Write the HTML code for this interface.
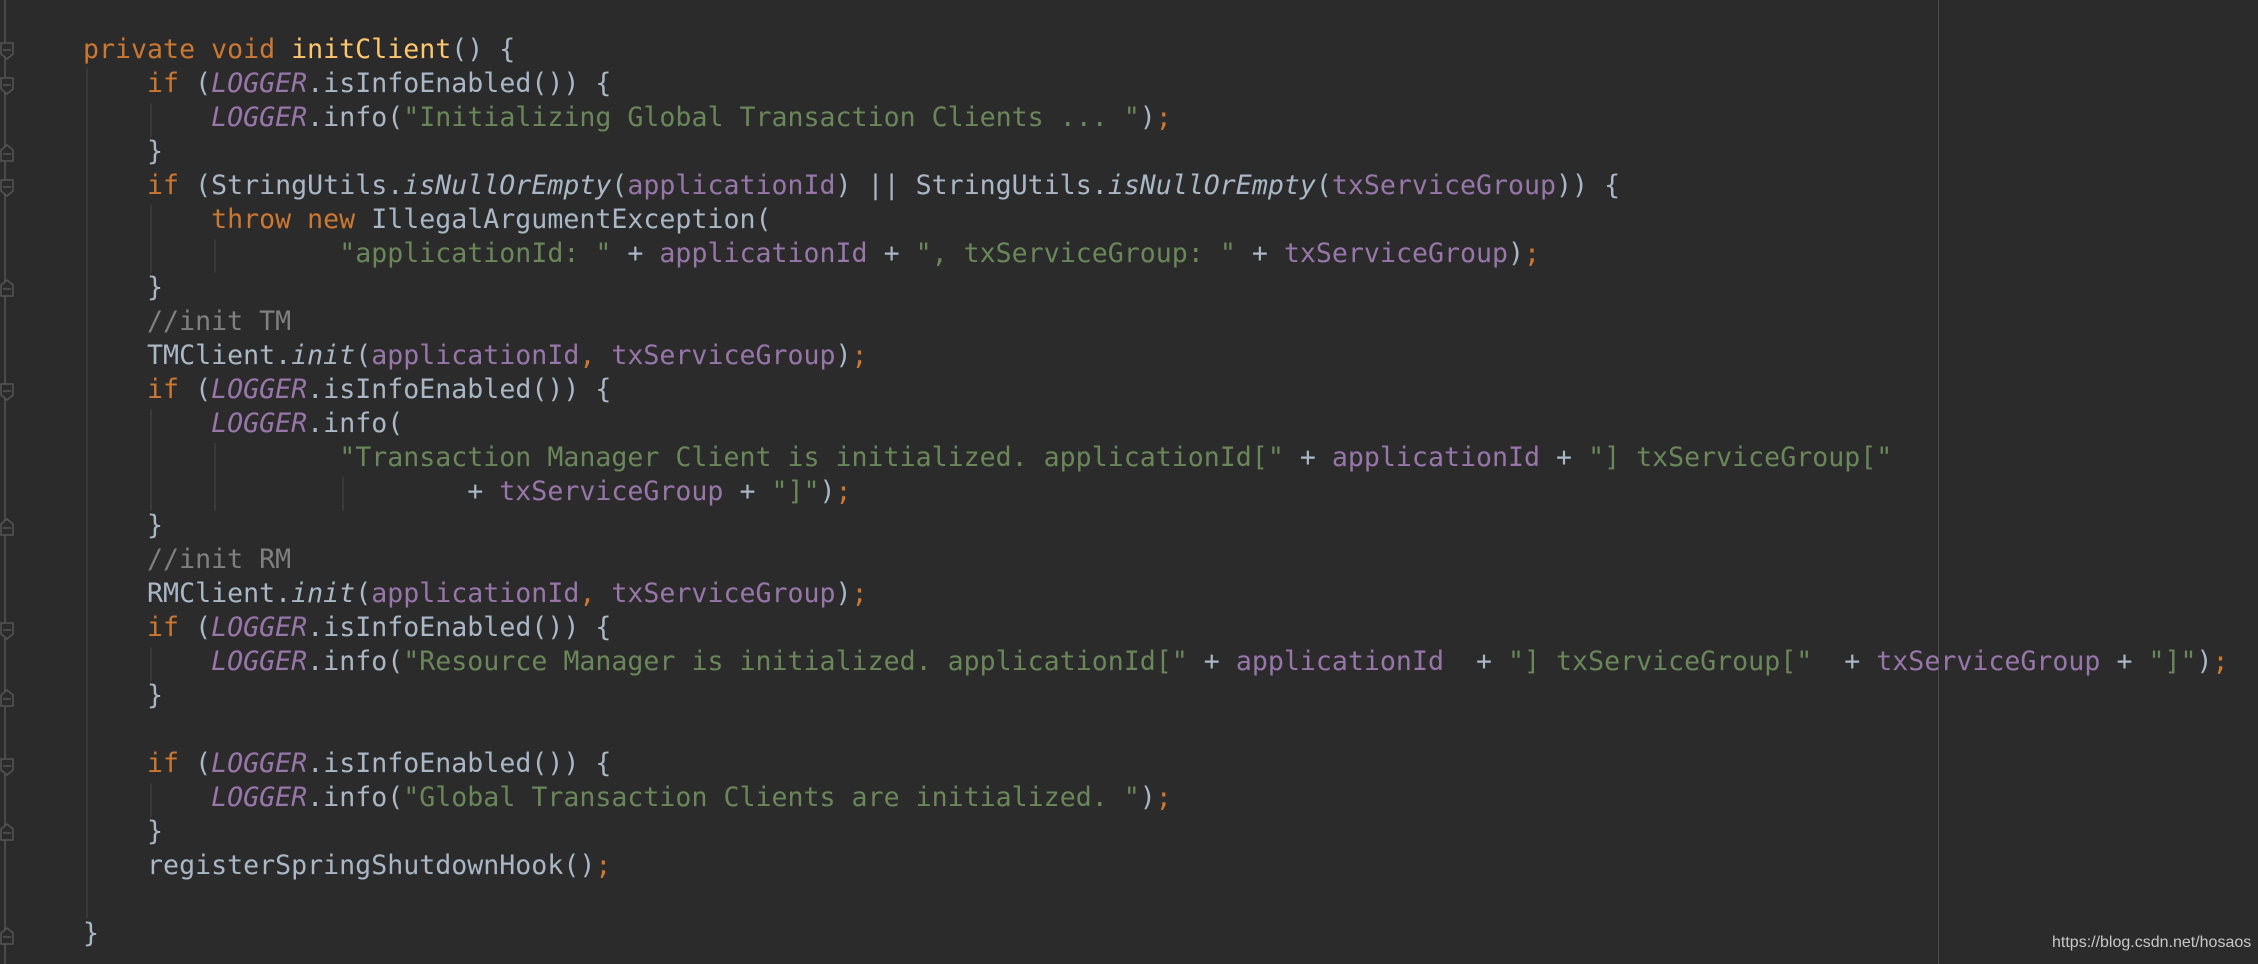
<!DOCTYPE html>
<html><head><meta charset="utf-8"><style>
html,body{margin:0;padding:0;background:#2b2b2b;width:2258px;height:964px;overflow:hidden;position:relative}
pre{position:absolute;left:83px;top:33px;margin:0;font-family:"DejaVu Sans Mono","Liberation Mono",monospace;font-size:26.6px;line-height:34px;color:#a9b7c6;white-space:pre}
.k{color:#cc7832}.f{color:#ffc66d}.s{color:#6a8759}.p{color:#9876aa}.i{font-style:italic}.c{color:#808080}
.g{position:absolute;width:2px;background:#393939}
.gut{position:absolute;left:4px;top:0;width:2px;height:964px;background:#4a4a4a}
.m{position:absolute;left:0}
.wm{position:absolute;left:2052px;top:934px;font-family:"Liberation Sans",sans-serif;font-size:16px;color:#c8c8c8}
.rl{position:absolute;left:1938px;top:0;width:1px;height:964px;background:#4b4b4b}
</style></head><body>
<div class="gut"></div>
<svg width="16" height="964" style="position:absolute;left:0;top:0">
<defs>
<g id="o"><path d="M1,-8 H13 V3 L7,8 L1,3 Z" fill="#2b2b2b" stroke="#555" stroke-width="1.5"/><path d="M3,-1 H11" stroke="#555" stroke-width="1.5"/></g>
<g id="c"><path d="M1,8 H13 V-3 L7,-8 L1,-3 Z" fill="#2b2b2b" stroke="#555" stroke-width="1.5"/><path d="M3,1 H11" stroke="#555" stroke-width="1.5"/></g>
</defs>
<use href="#o" y="51"/><use href="#o" y="86"/><use href="#c" y="153"/><use href="#o" y="188"/><use href="#c" y="288"/>
<use href="#o" y="392"/><use href="#c" y="527"/><use href="#o" y="631"/><use href="#c" y="698"/><use href="#o" y="767"/><use href="#c" y="832"/><use href="#c" y="936"/>
</svg>
<div class="rl"></div>
<div class="g" style="left:86px;top:68px;height:850px"></div>
<div class="g" style="left:150px;top:103px;height:34px"></div>
<div class="g" style="left:150px;top:205px;height:68px"></div>
<div class="g" style="left:214px;top:239px;height:34px"></div>
<div class="g" style="left:150px;top:409px;height:102px"></div>
<div class="g" style="left:214px;top:443px;height:68px"></div>
<div class="g" style="left:342px;top:477px;height:34px"></div>
<div class="g" style="left:150px;top:647px;height:34px"></div>
<div class="g" style="left:150px;top:783px;height:34px"></div>
<pre><span class="k">private void </span><span class="f">initClient</span>() {
    <span class="k">if </span>(<span class="p i">LOGGER</span>.isInfoEnabled()) {
        <span class="p i">LOGGER</span>.info(<span class="s">"Initializing Global Transaction Clients ... "</span>)<span class="k">;</span>
    }
    <span class="k">if </span>(StringUtils.<span class="i">isNullOrEmpty</span>(<span class="p">applicationId</span>) || StringUtils.<span class="i">isNullOrEmpty</span>(<span class="p">txServiceGroup</span>)) {
        <span class="k">throw new </span>IllegalArgumentException(
                <span class="s">"applicationId: "</span> + <span class="p">applicationId</span> + <span class="s">", txServiceGroup: "</span> + <span class="p">txServiceGroup</span>)<span class="k">;</span>
    }
    <span class="c">//init TM</span>
    TMClient.<span class="i">init</span>(<span class="p">applicationId</span><span class="k">, </span><span class="p">txServiceGroup</span>)<span class="k">;</span>
    <span class="k">if </span>(<span class="p i">LOGGER</span>.isInfoEnabled()) {
        <span class="p i">LOGGER</span>.info(
                <span class="s">"Transaction Manager Client is initialized. applicationId["</span> + <span class="p">applicationId</span> + <span class="s">"] txServiceGroup["</span>
                        + <span class="p">txServiceGroup</span> + <span class="s">"]"</span>)<span class="k">;</span>
    }
    <span class="c">//init RM</span>
    RMClient.<span class="i">init</span>(<span class="p">applicationId</span><span class="k">, </span><span class="p">txServiceGroup</span>)<span class="k">;</span>
    <span class="k">if </span>(<span class="p i">LOGGER</span>.isInfoEnabled()) {
        <span class="p i">LOGGER</span>.info(<span class="s">"Resource Manager is initialized. applicationId["</span> + <span class="p">applicationId</span>  + <span class="s">"] txServiceGroup["</span>  + <span class="p">txServiceGroup</span> + <span class="s">"]"</span>)<span class="k">;</span>
    }

    <span class="k">if </span>(<span class="p i">LOGGER</span>.isInfoEnabled()) {
        <span class="p i">LOGGER</span>.info(<span class="s">"Global Transaction Clients are initialized. "</span>)<span class="k">;</span>
    }
    registerSpringShutdownHook()<span class="k">;</span>

}</pre>
<div class="wm">https://blog.csdn.net/hosaos</div>
</body></html>
